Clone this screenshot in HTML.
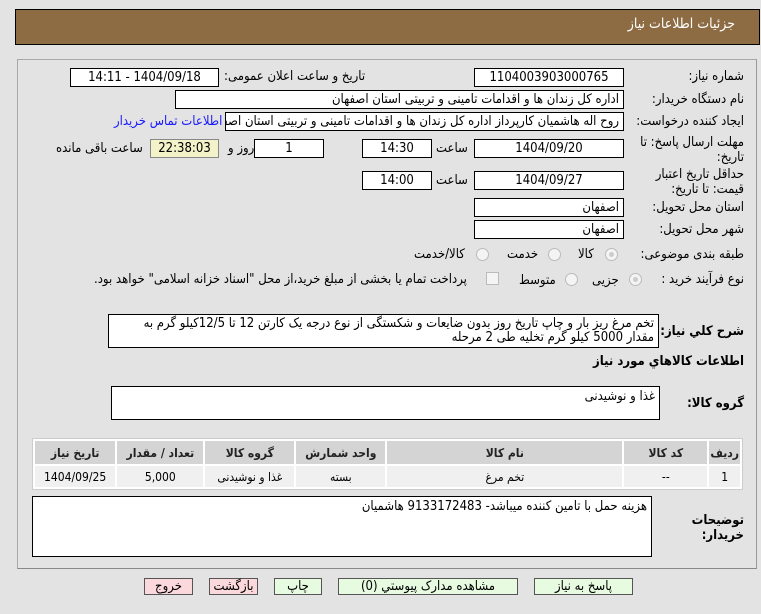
<!DOCTYPE html>
<html><head><meta charset="utf-8"><style>
body{margin:0;width:761px;height:614px;background:#e3e3e3;font-family:"DejaVu Sans Condensed","DejaVu Sans",sans-serif;font-size:12px;color:#000;position:relative;overflow:hidden}
.a{position:absolute;white-space:nowrap;direction:rtl}
.hdr{position:absolute;left:15px;top:9px;width:743px;height:34px;background:#8d6b43;border:1px solid #000}
.panel{position:absolute;left:17px;top:59px;width:738px;height:508px;border:1px solid #a8a8a8;border-bottom-color:#888;border-right-color:#999}
.box{position:absolute;background:#fff;border:1px solid #000;box-sizing:border-box;direction:rtl;white-space:nowrap;overflow:hidden;font-size:13px;padding:0 4px;line-height:17px}
.c{text-align:center}
.lbl{position:absolute;right:17px;direction:rtl;font-size:13px;white-space:nowrap}
.rad{position:absolute;width:11px;height:11px;border:1px solid #bbb;border-radius:50%;background:#f4f4f4}
.rad.on::after{content:"";position:absolute;left:3px;top:3px;width:5px;height:5px;border-radius:50%;background:#ccc}
table{position:absolute;left:32px;top:438px;width:711px;border-collapse:separate;border-spacing:2px;background:#fff;border:1px solid #ccc}
th{background:#d4d4d4;height:21px;font-size:12px;font-weight:bold;color:#222}
td{background:#f0f0f0;height:19px;text-align:center;font-size:12px}
.btn{position:absolute;top:578px;height:17px;border:1px solid #555;box-sizing:border-box;font-size:13px;text-align:center;line-height:15px;direction:rtl}
.g{background:#e6fbe0}.p{background:#fbd8dc}
</style></head><body>
<div class="hdr"></div>
<div class="a" style="right:26px;top:16px;color:#fff;font-size:14px">جزئیات اطلاعات نیاز</div>
<div class="panel"></div>

<div class="lbl" style="top:69px">شماره نیاز:</div>
<div class="box c" style="left:474px;top:68px;width:150px;height:19px">1104003903000765</div>
<div class="a" style="left:224px;top:69px;font-size:13px">تاریخ و ساعت اعلان عمومی:</div>
<div class="box c" style="left:70px;top:68px;width:149px;height:19px">1404/09/18 - 14:11</div>

<div class="lbl" style="top:92px">نام دستگاه خریدار:</div>
<div class="box" style="left:175px;top:90px;width:449px;height:19px">اداره کل زندان ها و اقدامات تامینی و تربیتی استان اصفهان</div>

<div class="lbl" style="top:114px">ایجاد کننده درخواست:</div>
<div class="box" style="left:225px;top:112px;width:399px;height:19px">روح اله هاشمیان کارپرداز اداره کل زندان ها و اقدامات تامینی و تربیتی استان اصفهان</div>
<div class="a" style="left:114px;top:114px;color:#1a1aff;font-size:13px">اطلاعات تماس خریدار</div>

<div class="lbl" style="top:135px">مهلت ارسال پاسخ: تا</div>
<div class="lbl" style="top:150px">تاریخ:</div>
<div class="box c" style="left:474px;top:139px;width:150px;height:19px">1404/09/20</div>
<div class="a" style="left:436px;top:141px;font-size:13px">ساعت</div>
<div class="box c" style="left:362px;top:139px;width:70px;height:19px">14:30</div>
<div class="box c" style="left:254px;top:139px;width:70px;height:19px">1</div>
<div class="a" style="left:228px;top:141px;font-size:13px">روز و</div>
<div class="box c" style="left:150px;top:139px;width:69px;height:19px;background:#f4f2c8;border-color:#888">22:38:03</div>
<div class="a" style="left:56px;top:141px;font-size:13px">ساعت باقی مانده</div>

<div class="lbl" style="top:167px">حداقل تاریخ اعتبار</div>
<div class="lbl" style="top:182px">قیمت: تا تاریخ:</div>
<div class="box c" style="left:474px;top:171px;width:150px;height:19px">1404/09/27</div>
<div class="a" style="left:436px;top:173px;font-size:13px">ساعت</div>
<div class="box c" style="left:362px;top:171px;width:70px;height:19px">14:00</div>

<div class="lbl" style="top:200px">استان محل تحویل:</div>
<div class="box" style="left:474px;top:198px;width:150px;height:19px">اصفهان</div>
<div class="lbl" style="top:222px">شهر محل تحویل:</div>
<div class="box" style="left:474px;top:220px;width:150px;height:19px">اصفهان</div>

<div class="lbl" style="top:247px">طبقه بندی موضوعی:</div>
<div class="rad on" style="left:605px;top:248px"></div>
<div class="a" style="left:578px;top:247px;font-size:13px">کالا</div>
<div class="rad" style="left:548px;top:248px"></div>
<div class="a" style="left:507px;top:247px;font-size:13px">خدمت</div>
<div class="rad" style="left:476px;top:248px"></div>
<div class="a" style="left:414px;top:247px;font-size:13px">کالا/خدمت</div>

<div class="lbl" style="top:272px">نوع فرآیند خرید :</div>
<div class="rad on" style="left:629px;top:273px"></div>
<div class="a" style="left:592px;top:273px;font-size:13px">جزیی</div>
<div class="rad" style="left:565px;top:273px"></div>
<div class="a" style="left:519px;top:273px;font-size:13px">متوسط</div>
<div style="position:absolute;left:486px;top:272px;width:11px;height:11px;border:1px solid #bbb;background:#f4f4f4"></div>
<div class="a" style="left:94px;top:272px;font-size:13px">پرداخت تمام یا بخشی از مبلغ خرید،از محل "اسناد خزانه اسلامی" خواهد بود.</div>

<div class="lbl" style="top:324px;font-weight:bold">شرح کلي نیاز:</div>
<div class="box" style="left:108px;top:314px;width:551px;height:34px;white-space:normal;line-height:14px;padding-top:2px">تخم مرغ ریز بار و چاپ تاریخ روز بدون ضایعات و شکستگی از نوع درجه یک کارتن 12 تا 12/5کیلو گرم به مقدار 5000 کیلو گرم تخلیه طی 2 مرحله</div>
<div class="lbl" style="top:354px;font-weight:bold">اطلاعات کالاهاي مورد نیاز</div>
<div class="lbl" style="top:396px;font-weight:bold">گروه کالا:</div>
<div class="box" style="left:111px;top:386px;width:549px;height:34px;line-height:14px;padding-top:3px">غذا و نوشیدنی</div>

<table dir="rtl">
<tr><th style="width:23px">ردیف</th><th style="width:81px">کد کالا</th><th style="width:233px">نام کالا</th><th style="width:87px">واحد شمارش</th><th style="width:87px">گروه کالا</th><th style="width:84px">تعداد / مقدار</th><th>تاریخ نیاز</th></tr>
<tr><td>1</td><td>--</td><td>تخم مرغ</td><td>بسته</td><td>غذا و نوشیدنی</td><td>5,000</td><td>1404/09/25</td></tr>
</table>

<div class="lbl" style="top:513px;font-weight:bold">توضیحات</div>
<div class="lbl" style="top:528px;font-weight:bold">خریدار:</div>
<div class="box" style="left:32px;top:496px;width:620px;height:61px;line-height:14px;padding-top:3px">هزینه حمل با تامین کننده میباشد- 9133172483 هاشمیان</div>

<div class="btn g" style="left:534px;width:99px">پاسخ به نیاز</div>
<div class="btn g" style="left:338px;width:180px">مشاهده مدارک پیوستي (0)</div>
<div class="btn g" style="left:274px;width:48px">چاپ</div>
<div class="btn p" style="left:209px;width:49px">بازگشت</div>
<div class="btn p" style="left:144px;width:49px">خروج</div>
</body></html>
